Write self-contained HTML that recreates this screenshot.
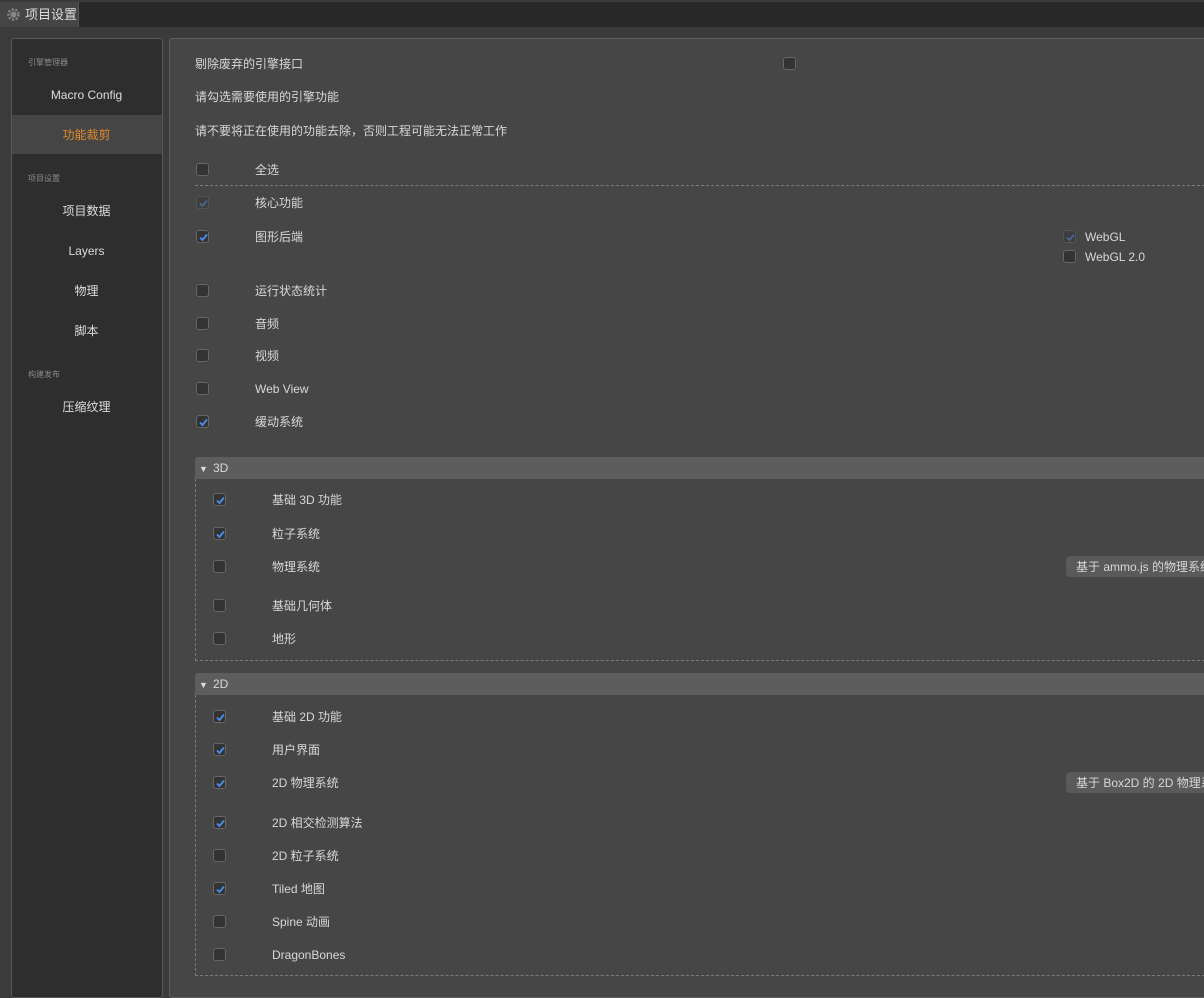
<!DOCTYPE html>
<html><head><meta charset="utf-8"><style>
*{margin:0;padding:0;box-sizing:border-box}
body{width:1204px;height:988px;overflow:hidden;background:#3b3b3b;font-family:"Liberation Sans","Noto Sans CJK SC",sans-serif;font-size:12px;color:#d8d8d8;position:relative}
.a{position:absolute;white-space:nowrap;line-height:14px}
.cb{position:absolute;width:13px;height:13px;border:1px solid #666;border-radius:3px;background:#333}
.cb svg{position:absolute;left:1px;top:1px}
.dis{opacity:.45}
.sl{position:absolute;font-size:8px;color:#8a8a8a;left:28px}
.si{position:absolute;left:11px;width:151px;text-align:center;font-size:12px;color:#ddd;line-height:14px}
</style></head><body>
<div class="a" style="left:0;top:0;width:1204px;height:27px;background:#282828;border-top:2px solid #3a3a3a"></div>
<div class="a" style="left:0;top:2px;width:79px;height:25px;background:#454545;border-right:1px solid #555"></div>
<svg class="a" style="left:7px;top:8px" width="13" height="13" viewBox="0 0 13 13"><circle cx="6.5" cy="6.5" r="5" fill="none" stroke="#888" stroke-width="2.5" stroke-dasharray="2 1.6"/><circle cx="6.5" cy="6.5" r="3" fill="#888"/></svg>
<div class="a" style="left:25px;top:8px;font-size:13px;color:#ddd">项目设置</div>

<div class="a" style="left:11px;top:38px;width:152px;height:960px;background:#2e2e2e;border:1px solid #585858;border-radius:3px"></div>
<div class="sl" style="top:57px">引擎管理器</div>
<div class="si" style="top:88px">Macro Config</div>
<div class="a" style="left:12px;top:115px;width:150px;height:39px;background:#454545"></div>
<div class="si" style="top:128px;color:#e08a2c">功能裁剪</div>
<div class="sl" style="top:173px">项目设置</div>
<div class="si" style="top:204px">项目数据</div>
<div class="si" style="top:244px">Layers</div>
<div class="si" style="top:284px">物理</div>
<div class="si" style="top:324px">脚本</div>
<div class="sl" style="top:369px">构建发布</div>
<div class="si" style="top:400px">压缩纹理</div>

<div class="a" style="left:169px;top:38px;width:1045px;height:960px;background:#464646;border:1px solid #5e5e5e;border-radius:3px"></div>

<div class="a" style="left:195px;top:57px">剔除废弃的引擎接口</div>
<div class="cb" style="left:783px;top:57px"></div>
<div class="a" style="left:195px;top:90px">请勾选需要使用的引擎功能</div>
<div class="a" style="left:195px;top:124px">请不要将正在使用的功能去除，否则工程可能无法正常工作</div>
<div class="a" style="left:195px;top:185px;width:1010px;border-top:1px dashed #7a7a7a"></div>

<div class="a" style="left:195px;top:457px;width:1010px;height:22px;background:#5d5d5d;border-radius:3px 0 0 0"></div>
<div class="a" style="left:199px;top:462px;font-size:9px;color:#ddd">▼</div>
<div class="a" style="left:213px;top:461px">3D</div>
<div class="a" style="left:195px;top:479px;width:1010px;height:182px;border:1px dashed #7a7a7a;border-top:none"></div>

<div class="a" style="left:195px;top:673px;width:1010px;height:22px;background:#5d5d5d;border-radius:3px 0 0 0"></div>
<div class="a" style="left:199px;top:678px;font-size:9px;color:#ddd">▼</div>
<div class="a" style="left:213px;top:677px">2D</div>
<div class="a" style="left:195px;top:695px;width:1010px;height:281px;border:1px dashed #7a7a7a;border-top:none"></div>

<div class="a" style="left:1066px;top:556px;width:150px;height:21px;background:#5a5a5a;border-radius:4px"></div>
<div class="a" style="left:1076px;top:560px">基于 ammo.js 的物理系统</div>
<div class="a" style="left:1066px;top:772px;width:150px;height:21px;background:#5a5a5a;border-radius:4px"></div>
<div class="a" style="left:1076px;top:776px">基于 Box2D 的 2D 物理系统</div>

<div id="rows"></div>
<script>
var ck='<svg width="11" height="11" viewBox="0 0 11 11"><path d="M2 5.5L4.5 8L9 2.5" fill="none" stroke="#4a8ef0" stroke-width="1.8"/></svg>';
var rows=[
[196,255,169,'全选',0],[196,255,202,'核心功能',2],[196,255,236,'图形后端',1],[196,255,290,'运行状态统计',0],[196,255,323,'音频',0],[196,255,355,'视频',0],[196,255,388,'Web View',0],[196,255,421,'缓动系统',1],
[213,272,499,'基础 3D 功能',1],[213,272,533,'粒子系统',1],[213,272,566,'物理系统',0],[213,272,605,'基础几何体',0],[213,272,638,'地形',0],
[213,272,716,'基础 2D 功能',1],[213,272,749,'用户界面',1],[213,272,782,'2D 物理系统',1],[213,272,822,'2D 相交检测算法',1],[213,272,855,'2D 粒子系统',0],[213,272,888,'Tiled 地图',1],[213,272,921,'Spine 动画',0],[213,272,954,'DragonBones',0],
[1063,1085,236,'WebGL',2],[1063,1085,256,'WebGL 2.0',0]];
var h='';
rows.forEach(function(r){
h+='<div class="cb'+(r[4]==2?' dis':'')+'" style="left:'+r[0]+'px;top:'+(r[2]-6)+'px">'+(r[4]?ck:'')+'</div>';
h+='<div class="a" style="left:'+r[1]+'px;top:'+(r[2]-6)+'px">'+r[3]+'</div>';
});
document.getElementById('rows').innerHTML=h;
</script>
</body></html>
